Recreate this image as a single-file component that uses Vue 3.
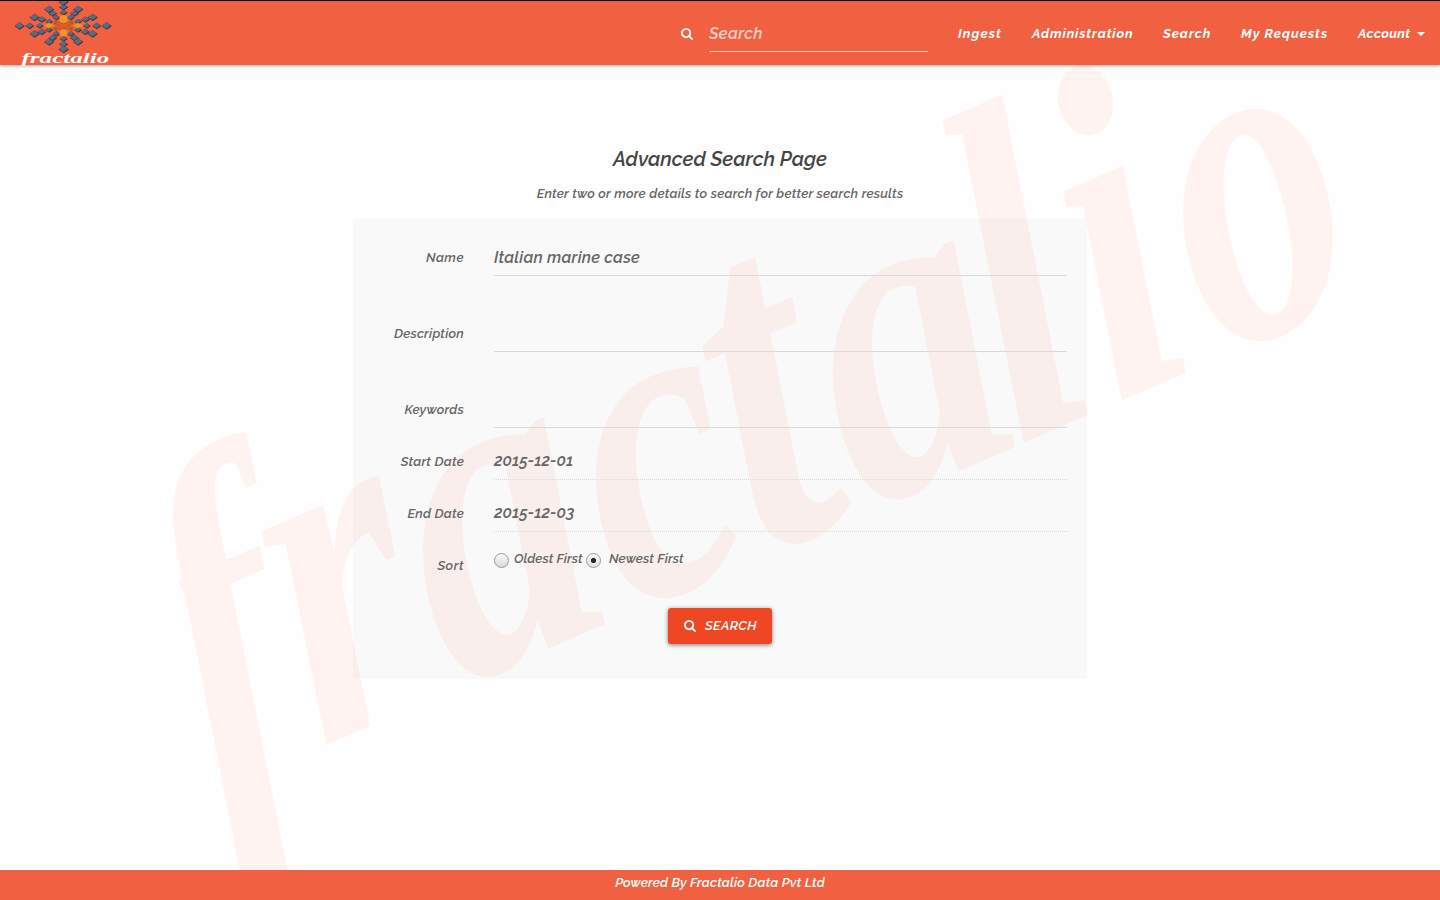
<script setup>
import { ref } from 'vue'

const links = [
  { text: 'Ingest', w: 44, ls: 1.1 },
  { text: 'Administration', w: 101, ls: 0.87 },
  { text: 'Search', w: 48, ls: 1.0 },
  { text: 'My Requests', w: 87, ls: 1.05 },
]
// letter, advance position (em), horizontal and vertical stretch
const watermark = [
  ['r', 0.333, 1, 1], ['a', 0.735, 1, 0.95], ['c', 1.25, 0.95, 0.92], ['t', 1.65, 1.04, 1.02],
  ['a', 1.96, 1, 0.95], ['l', 2.415, 1, 0.98], ['i', 2.705, 1, 0.97], ['o', 3.015, 0.94, 0.96],
]
const name = ref('Italian marine case')
const description = ref('')
const keywords = ref('')
const sort = ref('newest')

const arms = [
  [-44, 0], [43, 0], [0, -24], [0, 23.5],
  [-29, -8.5], [29, -8.5], [-29, 8], [29, 8],
  [-14.5, -16.5], [14.5, -16.5], [-14.5, 16], [14.5, 16],
]
const beads = []
for (const [x, y] of arms) {
  const steps = y === 0 ? [0.54, 0.77, 1] : x === 0 ? [0.55, 0.78, 1] : [0.5, 0.75, 1]
  for (const k of steps) beads.push({ x: 63.5 + x * k, y: 25.5 + y * k, r: 2.4 + k * 2.8 })
}
const diamond = (x, y, r) =>
  `M${x - r} ${y}L${x} ${y - r * 0.7}L${x + r} ${y}L${x} ${y + r * 0.7}Z`
</script>

<template>
  <div class="page">
    <svg class="watermark" width="1440" height="900" viewBox="0 0 1440 900" aria-hidden="true">
      <clipPath id="stem"><path d="M150 400V540L171 559L187 604L170 612V900H420V400Z" /></clipPath>
      <g clip-path="url(#stem)">
        <g transform="translate(212 798) rotate(-23.4) skewX(-4.5) scale(.755 .96)">
          <text x="0" y="0">f</text>
        </g>
      </g>
      <g transform="translate(208 796) rotate(-23.4) skewX(-4.5) scale(.755 1)">
        <text v-for="(g, i) in watermark" :key="i" :transform="`translate(${g[1] * 483} 0) scale(${g[2]} ${g[3]})`">{{ g[0] }}</text>
      </g>
    </svg>

    <header class="bar">
      <svg class="logo" width="130" height="65" viewBox="0 1 130 65">
        <g v-for="(b, i) in beads" :key="i">
          <path :d="diamond(b.x + 0.2, b.y + 0.5, b.r)" fill="#33313a" />
          <path :d="diamond(b.x - 0.2, b.y, b.r - 0.7)" fill="#5a6b80" />
        </g>
        <path d="M54 22l19 7.5M73 22l-19 7.5" stroke="#a8601f" stroke-width="3.5" />
        <g fill="#f7941d">
          <ellipse cx="63.5" cy="19" rx="4" ry="4" />
          <ellipse cx="63.5" cy="33" rx="4" ry="3.3" />
          <path d="M44 25.5l5-2.800 5 2.800-5 2.800zM73 25.5l5-2.800 5 2.800-5 2.800z" />
        </g>
        <path d="M57 23l13 5.2M70 23l-13 5.2" stroke="#ef5a2c" stroke-width="1.8" />
        <text class="wordmark" transform="translate(21.5 62.5) scale(1.73 1)">fractalio</text>
      </svg>
      <div class="find">
        <svg class="glass" viewBox="0 0 1664 1664" width="12" height="12"><path fill="#fff" d="M1152 704q0-185-131.500-316.500t-316.500-131.500-316.500 131.500-131.500 316.500 131.500 316.500 316.500 131.500 316.500-131.500 131.500-316.500zM1664 1536q0 52-38 90t-90 38q-54 0-90-38l-343-342q-179 124-399 124-143 0-273.500-55.500t-225-150-150-225-55.500-273.500 55.500-273.500 150-225 225-150 273.500-55.500 273.500 55.500 225 150 150 225 55.500 273.500q0 220-124 399l343 343q37 37 37 90z"/></svg>
        <input class="find-input" placeholder="Search" />
      </div>
      <nav class="links">
        <a v-for="l in links" :key="l.text" :style="{ width: l.w + 'px', letterSpacing: l.ls + 'px' }">{{ l.text }}</a>
        <a class="account">Account</a><i class="caret"></i>
      </nav>
    </header>

    <main>
      <h1>Advanced Search Page</h1>
      <p class="hint">Enter two or more details to search for better search results</p>
      <form class="panel" @submit.prevent>
        <div class="row tall"><label class="loose">Name</label><input v-model="name" class="field" /></div>
        <div class="row tall"><label>Description</label><input v-model="description" class="field" /></div>
        <div class="row"><label>Keywords</label><input v-model="keywords" class="field" /></div>
        <div class="row"><label>Start Date</label><div class="field date">2015-12-01</div></div>
        <div class="row"><label>End Date</label><div class="field date">2015-12-03</div></div>
        <div class="row">
          <label class="loose">Sort</label>
          <div class="choices">
            <i class="radio" :class="{ on: sort === 'oldest' }" @click="sort = 'oldest'"></i>
            <span class="oldest">Oldest First</span>
            <i class="radio" :class="{ on: sort === 'newest' }" @click="sort = 'newest'"></i>
            <span class="newest">Newest First</span>
          </div>
        </div>
        <button class="submit">
          <svg class="glass" viewBox="0 0 1664 1664" width="12" height="12"><path fill="#fff" d="M1152 704q0-185-131.500-316.500t-316.500-131.500-316.500 131.500-131.500 316.500 131.500 316.500 316.500 131.500 316.500-131.500 131.500-316.500zM1664 1536q0 52-38 90t-90 38q-54 0-90-38l-343-342q-179 124-399 124-143 0-273.500-55.500t-225-150-150-225-55.500-273.500 55.500-273.500 150-225 225-150 273.500-55.500 273.500 55.500 225 150 150 225 55.500 273.500q0 220-124 399l343 343q37 37 37 90z"/></svg>
          <span>SEARCH</span>
        </button>
      </form>
    </main>

    <footer>Powered By Fractalio Data Pvt Ltd</footer>
  </div>
</template>

<style>
body { background: #fff; overflow: hidden; }
</style>

<style scoped>
.page {
  position: relative;
  width: 1440px;
  height: 900px;
  box-sizing: border-box;
  display: flex;
  flex-direction: column;
  overflow: hidden;
  background: #fefefe;
  font: italic 600 13px/20px Raleway, Lato, sans-serif;
  letter-spacing: 0.22px;
  color: #666;
  white-space: nowrap;
}
.watermark { position: absolute; left: 0; top: 0; }
.watermark text {
  font: italic bold 483px "Liberation Serif", serif;
  letter-spacing: 0;
  fill: #fff3f1;
}
.bar {
  position: relative;
  flex: none;
  display: flex;
  height: 64px;
  border-top: 1px solid #000;
  background: #f16041;
  box-shadow: 0 1px 3px rgba(0, 0, 0, 0.35);
  color: #fff;
}
.logo { flex: none; }
.wordmark { font: italic bold 14.5px "Liberation Serif", serif; letter-spacing: 0; fill: #fff; }
.find { display: flex; margin-left: 551px; }
.find .glass { margin: 27px 16px 0 0; }
input {
  box-sizing: border-box;
  padding: 0;
  border: 0;
  outline: 0;
  background: none;
  font: inherit;
  letter-spacing: 0.25px;
  color: inherit;
}
.find-input {
  width: 219px;
  height: 37px;
  margin-top: 14px;
  border-bottom: 1px solid #fbd0c6;
  font-size: 16px;
  letter-spacing: 0.4px;
}
.find-input::placeholder { color: #fff; opacity: 0.7; }
.links { display: flex; gap: 30px; margin-left: 30px; line-height: 66px; font-weight: 700; }
.links .account { width: 53px; letter-spacing: 0.35px; }
.caret { width: 0; height: 0; margin: 31px 0 0 -24px; border: 4px solid transparent; border-top-color: #fff; }
main { position: relative; flex: 1; display: flex; flex-direction: column; align-items: center; }
h1 { margin: 80px 0 0; font: inherit; font-size: 20px; line-height: 28px; letter-spacing: 0; color: #444; }
.hint { margin: 11px 0 15px; }
.panel {
  width: 734px;
  height: 460px;
  box-sizing: border-box;
  padding: 18px 20px 0 0;
  display: flex;
  flex-direction: column;
  align-items: stretch;
  background: rgba(0, 0, 0, 0.02);
}
.row { display: flex; height: 52px; }
.row.tall { height: 76px; }
.row label { width: 111px; margin-right: 30px; line-height: 42px; text-align: right; }
.row .loose { letter-spacing: 0.5px; }
.field { width: 573px; height: 39px; padding-top: 2px; border-bottom: 1px solid #d9d9d9; font-size: 16px; color: #666; }
.date { box-sizing: border-box; padding: 0; border-bottom-style: dotted; line-height: 40px; letter-spacing: 0; }
.choices { display: flex; align-items: flex-start; padding-top: 4px; letter-spacing: 0.13px; }
.radio {
  width: 15px;
  height: 15px;
  margin-top: 4px;
  box-sizing: border-box;
  border: 1px solid #999;
  border-radius: 50%;
  background: linear-gradient(#fafafa, #d9d9d9);
}
.radio.on { background: radial-gradient(circle, #222b30 0 2.2px, transparent 3px), linear-gradient(#fafafa, #e2e2e2); }
.oldest { width: 72px; margin-left: 5px; letter-spacing: 0.05px; }
.newest { margin-left: 8px; }
.submit {
  align-self: center;
  display: flex;
  align-items: center;
  width: 104px;
  height: 36px;
  margin: 11px -20px 0 0;
  padding: 0 0 0 16px;
  border: 0;
  border-radius: 3px;
  background: #ef4723;
  box-shadow: 0 1px 4px rgba(0, 0, 0, 0.5);
  font: inherit;
  letter-spacing: 0.35px;
  color: #fff;
}
.submit .glass { margin-right: 9px; }
footer {
  position: relative;
  flex: none;
  height: 30px;
  background: #f16041;
  color: #fff;
  text-align: center;
  line-height: 25px;
  letter-spacing: 0.17px;
}
</style>
